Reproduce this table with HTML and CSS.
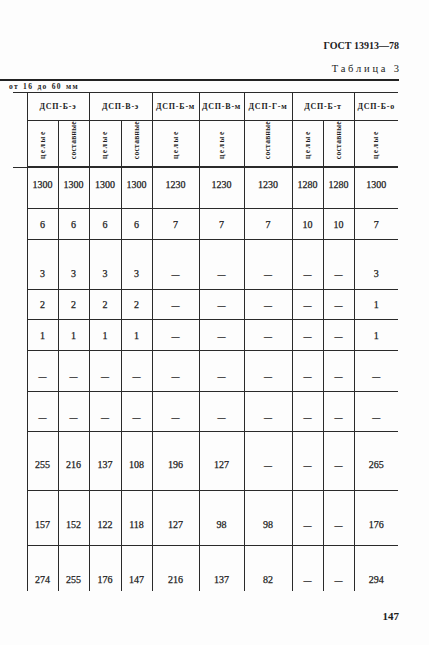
FILE: index.html
```html
<!DOCTYPE html>
<html lang="ru">
<head>
<meta charset="utf-8">
<link rel="stylesheet" href="styles.css">
</head>
<body>
<div class="page">
  <div class="doc-head">
    <div class="gost">ГОСТ 13913—78</div>
    <div class="tab-title">Таблица 3</div>
  </div>
  <div class="rule"></div>
  <div class="range">от 16 до 60 мм</div>
  <table class="grid">
    <colgroup>
      <col class="w14"><col class="w31"><col class="w31"><col class="w32"><col class="w31"><col class="w47"><col class="w45"><col class="w48"><col class="w31"><col class="w31"><col class="w44">
    </colgroup>
    <thead>
      <tr class="h1">
        <th class="sp" rowspan="2"></th>
        <th colspan="2">ДСП-Б-э</th>
        <th colspan="2">ДСП-В-э</th>
        <th>ДСП-Б-м</th>
        <th>ДСП-В-м</th>
        <th>ДСП-Г-м</th>
        <th colspan="2">ДСП-Б-т</th>
        <th class="last">ДСП-Б-о</th>
      </tr>
      <tr class="h2">
        <th><span class="vt w">целые</span></th>
        <th><span class="vt s">составные</span></th>
        <th><span class="vt w">целые</span></th>
        <th><span class="vt s">составные</span></th>
        <th><span class="vt w">целые</span></th>
        <th><span class="vt w">целые</span></th>
        <th><span class="vt s">составные</span></th>
        <th><span class="vt w">целые</span></th>
        <th><span class="vt s">составные</span></th>
        <th class="last"><span class="vt w">целые</span></th>
      </tr>
    </thead>
    <tbody>
      <tr class="r1"><td class="sp" rowspan="10"></td><td>1300</td><td>1300</td><td>1300</td><td>1300</td><td>1230</td><td>1230</td><td>1230</td><td>1280</td><td>1280</td><td class="last">1300</td></tr>
      <tr class="r2"><td>6</td><td>6</td><td>6</td><td>6</td><td>7</td><td>7</td><td>7</td><td>10</td><td>10</td><td class="last">7</td></tr>
      <tr class="r3"><td>3</td><td>3</td><td>3</td><td>3</td><td><span class="d">—</span></td><td><span class="d">—</span></td><td><span class="d">—</span></td><td><span class="d">—</span></td><td><span class="d">—</span></td><td class="last">3</td></tr>
      <tr class="r4"><td>2</td><td>2</td><td>2</td><td>2</td><td><span class="d">—</span></td><td><span class="d">—</span></td><td><span class="d">—</span></td><td><span class="d">—</span></td><td><span class="d">—</span></td><td class="last">1</td></tr>
      <tr class="r5"><td>1</td><td>1</td><td>1</td><td>1</td><td><span class="d">—</span></td><td><span class="d">—</span></td><td><span class="d">—</span></td><td><span class="d">—</span></td><td><span class="d">—</span></td><td class="last">1</td></tr>
      <tr class="r6"><td><span class="d">—</span></td><td><span class="d">—</span></td><td><span class="d">—</span></td><td><span class="d">—</span></td><td><span class="d">—</span></td><td><span class="d">—</span></td><td><span class="d">—</span></td><td><span class="d">—</span></td><td><span class="d">—</span></td><td class="last"><span class="d">—</span></td></tr>
      <tr class="r7"><td><span class="d">—</span></td><td><span class="d">—</span></td><td><span class="d">—</span></td><td><span class="d">—</span></td><td><span class="d">—</span></td><td><span class="d">—</span></td><td><span class="d">—</span></td><td><span class="d">—</span></td><td><span class="d">—</span></td><td class="last"><span class="d">—</span></td></tr>
      <tr class="r8"><td>255</td><td>216</td><td>137</td><td>108</td><td>196</td><td>127</td><td><span class="d">—</span></td><td><span class="d">—</span></td><td><span class="d">—</span></td><td class="last">265</td></tr>
      <tr class="r9"><td>157</td><td>152</td><td>122</td><td>118</td><td>127</td><td>98</td><td>98</td><td><span class="d">—</span></td><td><span class="d">—</span></td><td class="last">176</td></tr>
      <tr class="r10"><td>274</td><td>255</td><td>176</td><td>147</td><td>216</td><td>137</td><td>82</td><td><span class="d">—</span></td><td><span class="d">—</span></td><td class="last">294</td></tr>
    </tbody>
  </table>
  <div class="pnum">147</div>
</div>
</body>
</html>
```
FILE: styles.css
```css
* { box-sizing: border-box; }
html, body { margin: 0; padding: 0; background: #fdfdfd; }
body {
  font-family: "Liberation Serif", "DejaVu Serif", serif;
  color: #1c1c1c;
  width: 429px;
  height: 645px;
  overflow: hidden;
}
.page { width: 399px; padding-top: 40px; }
.doc-head { text-align: right; }
.gost { font-weight: bold; font-size: 10px; line-height: 12px; }
.tab-title {
  font-size: 10.5px;
  line-height: 12px;
  letter-spacing: 2.8px;
  margin-top: 11px;
  margin-right: -2.8px;
}
.rule { height: 2px; background: #222; margin-top: 4px; }
.range {
  font-size: 7.5px;
  font-weight: bold;
  line-height: 10px;
  margin-top: 1px;
  padding-left: 9px;
  letter-spacing: 1.3px;
  word-spacing: 1px;
}
.grid {
  margin-left: 13px;
  border-collapse: collapse;
  table-layout: fixed;
  width: 385px;
}
.w14 { width: 14px; }
.w31 { width: 31px; }
.w32 { width: 32px; }
.w44 { width: 44px; }
.w45 { width: 45px; }
.w47 { width: 47px; }
.w48 { width: 48px; }
.grid th, .grid td {
  border: 1px solid #2a2a2a;
  padding: 0;
  text-align: center;
}
.grid .sp { border-left: none; border-right: none; }
.grid tbody .sp { border: none; }
.grid .last { border-right: none; }
.h1 { height: 28px; }
.h1 th {
  font-size: 8px;
  font-weight: bold;
  letter-spacing: 0.8px;
  vertical-align: middle;
}
.h2 { height: 40px; }
.h2 th { vertical-align: bottom; padding-bottom: 3px; border-bottom-width: 2px; }
.vt {
  display: inline-block;
  writing-mode: vertical-rl;
  transform: rotate(180deg);
  font-size: 7.5px;
  font-weight: bold;
  line-height: 8px;
}
.vt.w { letter-spacing: 1.6px; }
.vt.s { letter-spacing: 0.3px; }
.grid tbody td {
  vertical-align: top;
  font-size: 10px;
  line-height: 10px;
  -webkit-text-stroke: 0.25px currentColor;
}
.grid tbody tr:last-child td { border-bottom: none; }
.d { font-size: 8px; }
.r1 { height: 41px; } .r1 td { padding-top: 12px; }
.r2 { height: 31px; } .r2 td { padding-top: 11px; }
.r3 { height: 50px; } .r3 td { padding-top: 29px; }
.r4 { height: 30px; } .r4 td { padding-top: 10px; }
.r5 { height: 31px; } .r5 td { padding-top: 11px; }
.r6 { height: 41px; } .r6 td { padding-top: 20px; }
.r7 { height: 40px; } .r7 td { padding-top: 20px; }
.r8 { height: 59px; } .r8 td { padding-top: 28px; }
.r9 { height: 55px; } .r9 td { padding-top: 29px; }
.r10 { height: 46px; } .r10 td { padding-top: 29px; }
.pnum {
  text-align: right;
  font-size: 11px;
  font-weight: bold;
  line-height: 13px;
  margin-top: 19px;
}
```
